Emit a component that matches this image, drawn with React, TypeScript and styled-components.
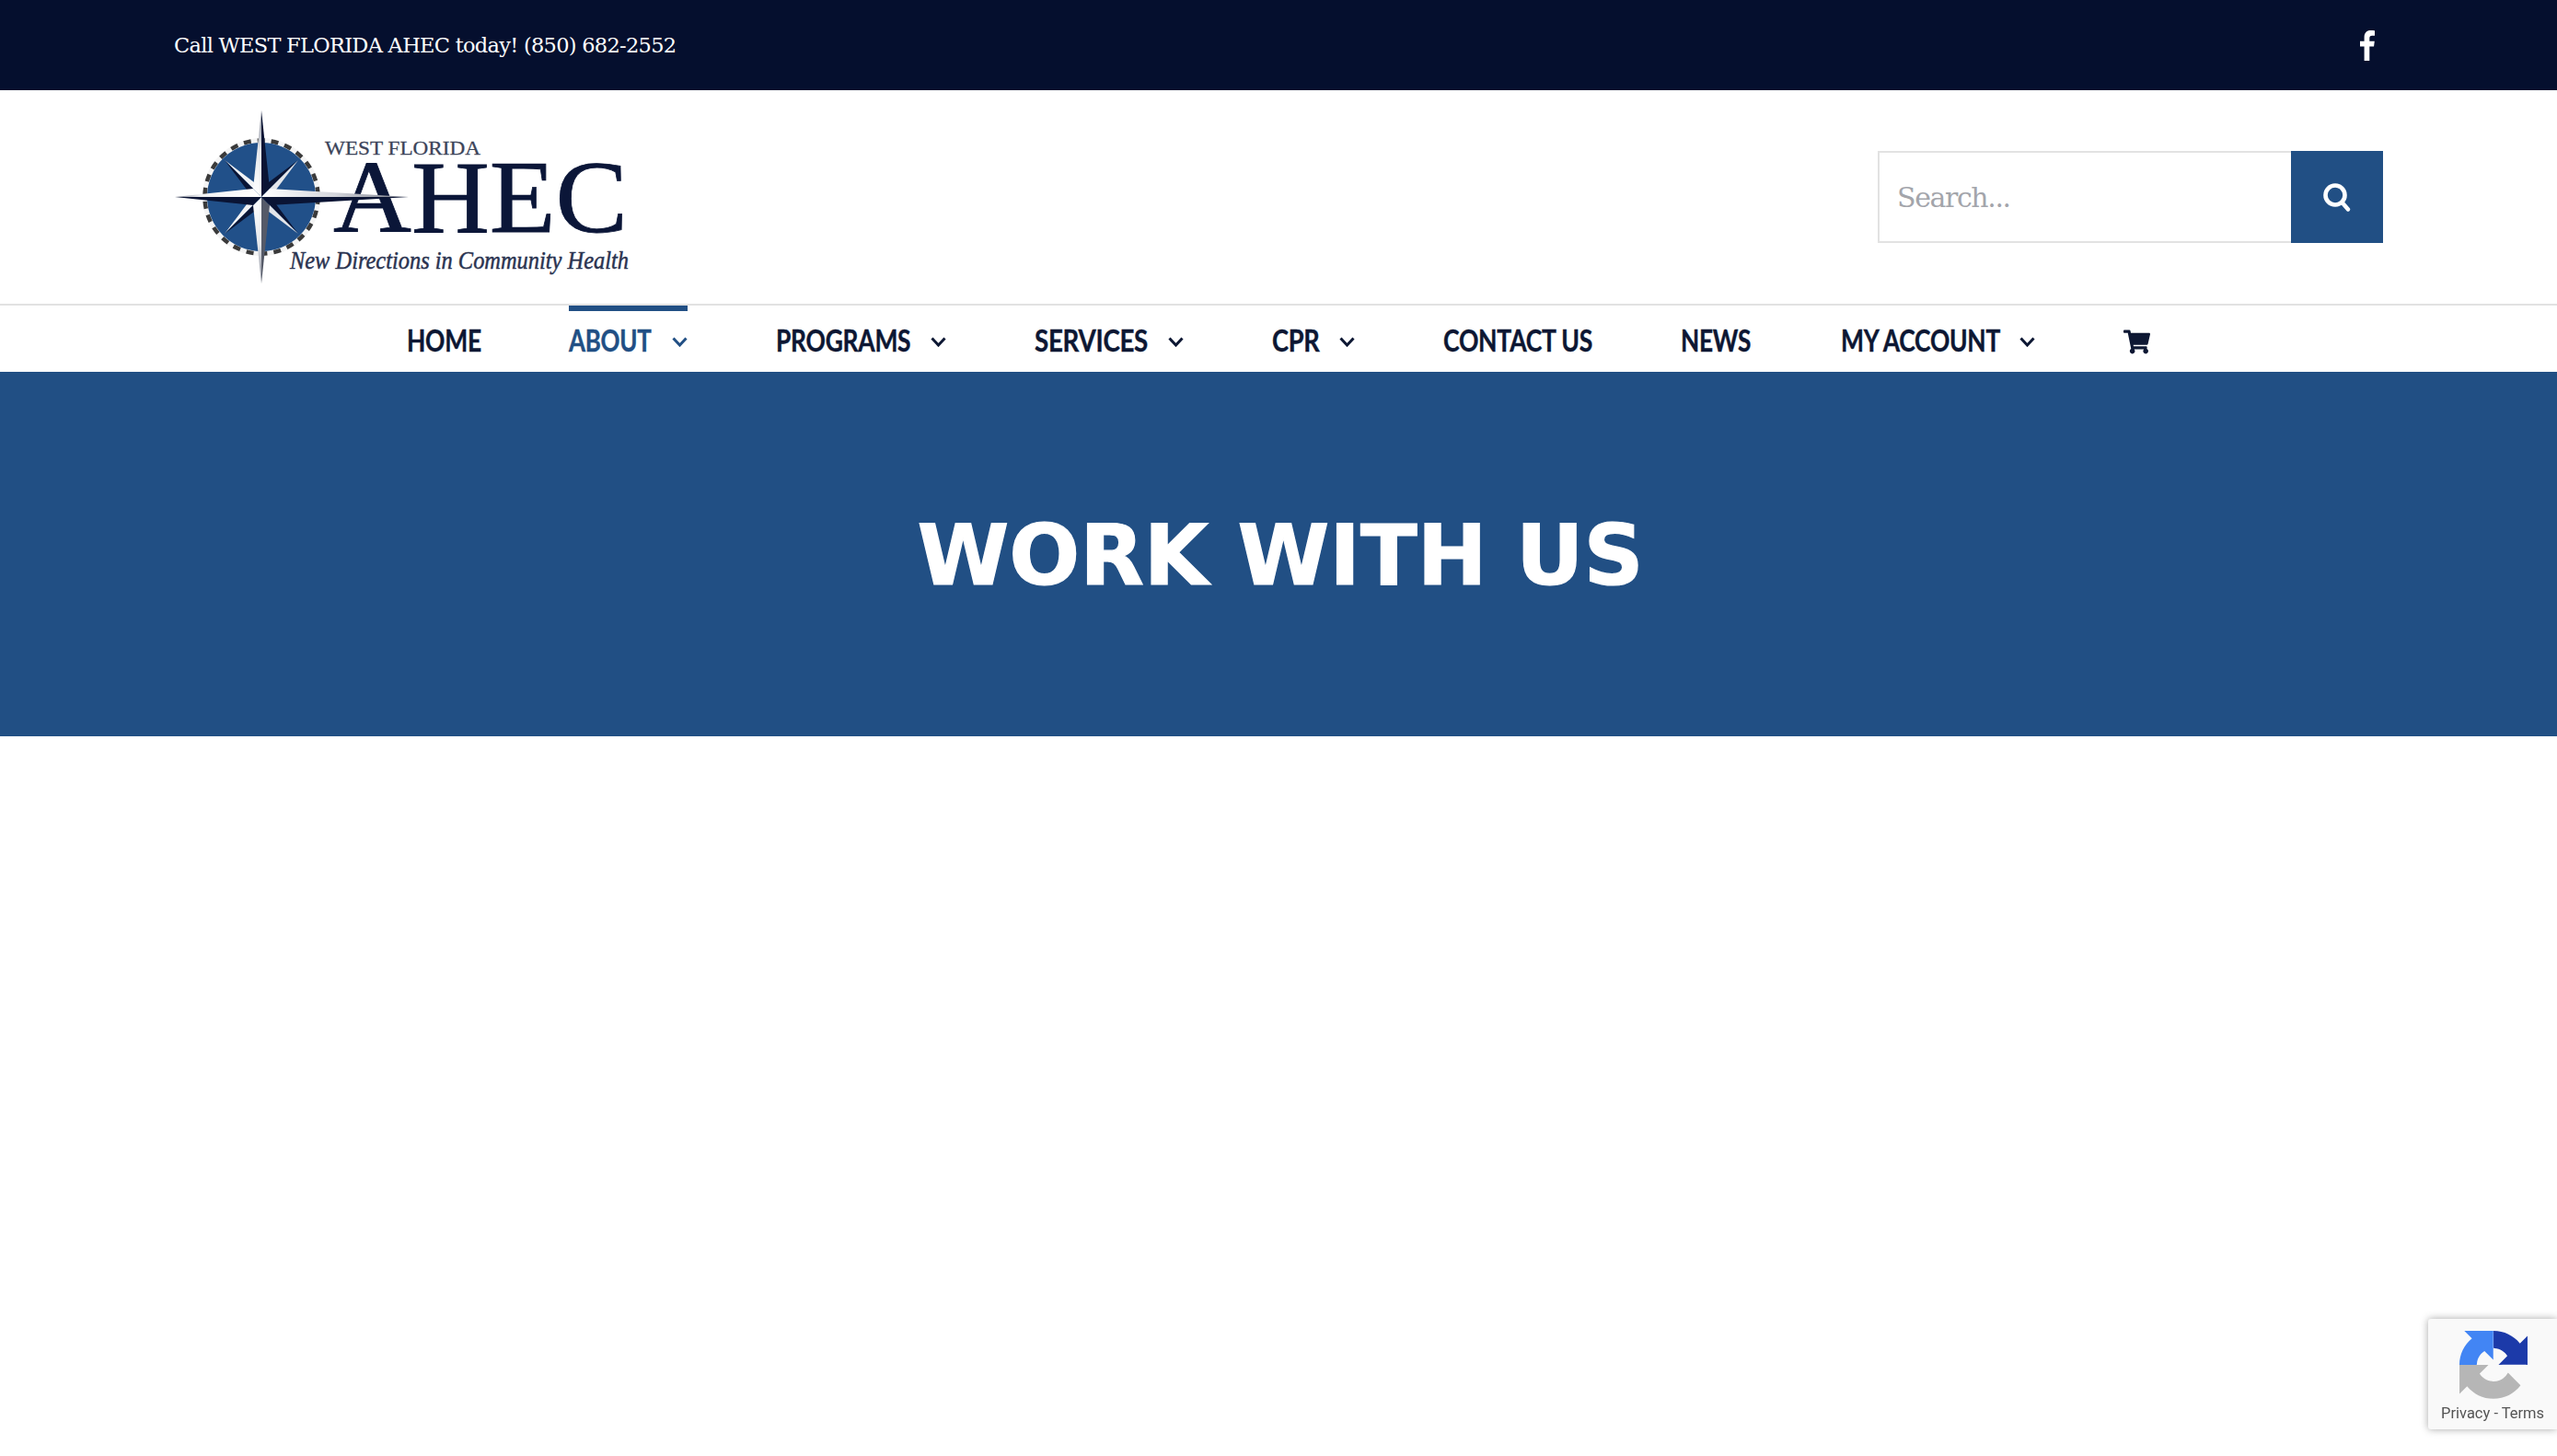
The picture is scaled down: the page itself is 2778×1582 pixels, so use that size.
import React from "react";
import styled, { createGlobalStyle } from "styled-components";
import { FaShoppingCart } from "react-icons/fa";

const navy = "#050f2e";
const blue = "#214f84";

const Global = createGlobalStyle`
  html, body { margin: 0; padding: 0; background: #fff; }
  body { font-family: "Liberation Serif", serif; overflow: hidden; }
`;
const Page = styled.div`
  width: 2778px;
  height: 1582px;
  background: #fff;
  display: flex;
  flex-direction: column;
`;
const TopBar = styled.div`
  height: 98px;
  flex: none;
  background: ${navy};
  color: #fff;
  display: flex;
  align-items: center;
  justify-content: space-between;
  padding: 0 198px 0 189px;
`;
const Phone = styled.span`
  font: 400 22.5px "DejaVu Serif", serif;
  letter-spacing: -0.72px;
`;
const Social = styled.span`
  display: flex;
  color: #fff;
`;
const Header = styled.header`
  height: 232px;
  flex: none;
  display: flex;
  align-items: center;
  justify-content: space-between;
  padding: 0 189px 0 186px;
  border-bottom: 2px solid #e2e2e2;
  box-sizing: content-box;
`;
const Search = styled.form`
  display: flex;
  height: 100px;
  width: 549px;
`;
const SearchInput = styled.input`
  flex: 1;
  min-width: 0;
  box-sizing: border-box;
  border: 2px solid #e2e2e2;
  border-right: 0;
  padding: 0 19px;
  font: 400 30px "DejaVu Serif", serif;
  letter-spacing: -1.4px;
  outline: none;
  &::placeholder { color: #a3a5ab; opacity: 1; }
`;
const SearchButton = styled.button`
  width: 100px;
  border: 0;
  padding: 0;
  background: ${blue};
  display: flex;
  align-items: center;
  justify-content: center;
`;
const Nav = styled.nav`
  height: 72px;
  flex: none;
  display: flex;
  justify-content: center;
  gap: 96px;
`;
const NavItem = styled.a<{ $active?: boolean }>`
  display: flex;
  align-items: center;
  gap: 20px;
  box-sizing: border-box;
  height: 72px;
  border-top: 6px solid ${(p) => (p.$active ? blue : "transparent")};
  color: ${(p) => (p.$active ? blue : "#0d1733")};
`;
const NavLabel = styled.span<{ $w: number; $sx: number }>`
  display: block;
  width: ${(p) => p.$w}px;
  padding-bottom: 3px;
  font: 700 32px "Lato", sans-serif;
  letter-spacing: -0.3px;
  -webkit-text-stroke: 0.4px currentColor;
  text-transform: uppercase;
  white-space: nowrap;
  transform: scaleX(${(p) => p.$sx});
  transform-origin: left center;
`;
const Hero = styled.section`
  height: 396px;
  flex: none;
  background: ${blue};
  display: flex;
  justify-content: center;
  padding: 146px 0 0 4px;
  box-sizing: border-box;
`;
const Title = styled.h1`
  margin: 0;
  color: #fff;
  font: 700 90.5px/1.2 "DejaVu Sans", sans-serif;
  -webkit-text-stroke: 1.2px #fff;
  height: 108px;
`;
const Badge = styled.div`
  position: fixed;
  left: 2638px;
  top: 1433px;
  width: 140px;
  height: 120px;
  background: #f9f9f9;
  border-radius: 3px 0 0 3px;
  box-shadow: 0 0 8px rgba(0, 0, 0, 0.35);
  display: flex;
  flex-direction: column;
  padding: 13px 0 0 14px;
  box-sizing: border-box;
`;
const BadgeMark = styled.div`
  margin-left: 20px;
  display: flex;
`;
const BadgeText = styled.div`
  margin-top: 7px;
  font: 400 16.5px/18px "Roboto", sans-serif;
  color: #555;
  white-space: nowrap;
`;

const Chevron = () => (
  <svg width="17" height="11" viewBox="0 0 17 11" fill="none">
    <polyline points="1.5,1.5 8.5,9 15.5,1.5" stroke="currentColor" strokeWidth="3" />
  </svg>
);

const FacebookIcon = () => (
  <svg width="16" height="33" viewBox="0 0 16 33" fill="#fff">
    <path d="M4.6 33V17.6H0v-5.8h4.6V7.6C4.6 2.6 7.4 0 11.4 0c1.900 0 3.600.15 4.600.3v5.400h-2.800c-2.300 0-2.900 1.100-2.900 2.900v3.200h5.500l-.75 5.800h-4.750V33z" />
  </svg>
);

const dark = "#0a1434";

const Logo = () => (
  <svg width="540" height="196" viewBox="186 116 540 196">
    <defs>
      <linearGradient id="silV" x1="0" y1="0" x2="0" y2="1">
        <stop offset="0" stopColor="#7d8290" />
        <stop offset="0.45" stopColor="#e6e8ec" />
        <stop offset="1" stopColor="#ffffff" />
      </linearGradient>
      <linearGradient id="silVB" x1="0" y1="0" x2="0" y2="1">
        <stop offset="0" stopColor="#ffffff" />
        <stop offset="0.55" stopColor="#e6e8ec" />
        <stop offset="1" stopColor="#7d8290" />
      </linearGradient>
      <linearGradient id="silL" x1="0" y1="0" x2="1" y2="0">
        <stop offset="0" stopColor="#7d8290" />
        <stop offset="0.3" stopColor="#f0f1f3" />
        <stop offset="1" stopColor="#ffffff" />
      </linearGradient>
      <linearGradient id="silR" x1="0" y1="0" x2="1" y2="0">
        <stop offset="0" stopColor="#ffffff" />
        <stop offset="0.5" stopColor="#d4d6dc" />
        <stop offset="1" stopColor="#6e7280" />
      </linearGradient>
    </defs>
    <circle cx="284" cy="214" r="64" fill="#f4f4f4" />
    <circle cx="284" cy="214" r="61.500" fill="none" stroke="#3a3a3a" strokeWidth="4.500" strokeDasharray="8 7" />
    <circle cx="284" cy="214" r="59" fill="#215089" />
    {/* diagonal points */}
    <polygon points="244,174 276,198 276,206" fill="#f2f3f5" />
    <polygon points="244,174 268,206 276,206" fill={dark} />
    <polygon points="324,174 292,198 292,206" fill={dark} />
    <polygon points="324,174 300,206 292,206" fill="#e4e6ea" />
    <polygon points="244,254 268,222 276,222" fill="#f2f3f5" />
    <polygon points="244,254 276,230 276,222" fill={dark} />
    <polygon points="324,254 300,222 292,222" fill={dark} />
    <polygon points="324,254 292,230 292,222" fill="#e4e6ea" />
    <text x="353" y="168" fontFamily="Liberation Serif" fontSize="22" fill="#3c4459" stroke="#3c4459" strokeWidth="0.3" textLength="169" lengthAdjust="spacingAndGlyphs">WEST FLORIDA</text>
    <text x="362" y="252" fontFamily="Liberation Serif" fontSize="112" fill="#0b1638" stroke="#0b1638" strokeWidth="0.8" textLength="320" lengthAdjust="spacingAndGlyphs">AHEC</text>
    <text x="315" y="292" fontFamily="Liberation Serif" fontStyle="italic" fontSize="28" fill="#2a3350" stroke="#2a3350" strokeWidth="0.5" textLength="368" lengthAdjust="spacingAndGlyphs">New Directions in Community Health</text>
    {/* main points */}
    <polygon points="284,120 275,205 284,214" fill="url(#silV)" />
    <polygon points="284,120 293,205 284,214" fill={dark} />
    <polygon points="284,308 275,223 284,214" fill="url(#silVB)" />
    <polygon points="284,308 293,223 284,214" fill="#555a68" />
    <polygon points="190,214 275,205 284,214" fill="url(#silL)" />
    <polygon points="190,214 275,223 284,214" fill={dark} />
    <polygon points="444,214 293,205 284,214" fill="url(#silR)" />
    <polygon points="444,214 293,223 284,214" fill={dark} />
  </svg>
);

const SearchIcon = () => (
  <svg width="30" height="31" viewBox="0 0 30 31" fill="none" stroke="#fff" strokeLinecap="round">
    <circle cx="13" cy="13" r="10.5" strokeWidth="4.6" />
    <line x1="20.5" y1="21" x2="27" y2="28.5" strokeWidth="4.4" />
  </svg>
);

const RecaptchaIcon = () => (
  <svg width="74" height="74" viewBox="0 0 64 64">
    <path fill="#1c3aa9" d="M64 31.955l-.033-1.37V4.687l-7.16 7.16C50.948 4.674 42.033.093 32.05.093v16.23c.485 0 .86.057 1.135.163 4.976.393 9.288 3.14 11.828 7.124l-8.307 8.307c10.522-.04 22.4-.066 27.295.006" />
    <path fill="#4285f4" d="M31.862.001l-1.37.033H4.594l7.16 7.16C4.58 13.054 0 21.97 0 31.953h16.26c0-.485.057-.86.163-1.135.393-4.976 3.14-9.288 7.124-11.828l8.307 8.307c-.04-10.522-.066-22.4.006-27.295" />
    <path fill="#b6b6b6" d="M.001 31.953l.033 1.37v25.898l7.16-7.160c5.86 7.173 14.775 11.754 24.758 11.754 10.4 0 19.622-4.96 25.458-12.640l-11.736-11.860a15.55 15.55 0 0 1-4.754 5.334c-2.05 1.6-4.952 2.906-8.968 2.906-.485 0-.86-.057-1.135-.163-4.976-.393-9.288-3.14-11.828-7.124l8.307-8.307c-10.522.04-22.4.066-27.295-.006" />
  </svg>
);

const items: { label: string; w: number; sx: number; caret?: boolean; active?: boolean }[] = [
  { label: "Home", w: 80, sx: 0.825 },
  { label: "About", w: 92, sx: 0.81, caret: true, active: true },
  { label: "Programs", w: 148, sx: 0.825, caret: true },
  { label: "Services", w: 125, sx: 0.865, caret: true },
  { label: "CPR", w: 53, sx: 0.85, caret: true },
  { label: "Contact Us", w: 162, sx: 0.83 },
  { label: "News", w: 78, sx: 0.82 },
  { label: "My Account", w: 174, sx: 0.825, caret: true },
];

export default function App() {
  return (
    <Page>
      <Global />
      <TopBar>
        <Phone>Call WEST FLORIDA AHEC today! (850) 682-2552</Phone>
        <Social><FacebookIcon /></Social>
      </TopBar>
      <Header>
        <Logo />
        <Search onSubmit={(e) => e.preventDefault()}>
          <SearchInput placeholder="Search..." />
          <SearchButton aria-label="Search"><SearchIcon /></SearchButton>
        </Search>
      </Header>
      <Nav>
        {items.map((it) => (
          <NavItem key={it.label} $active={it.active}>
            <NavLabel $w={it.w} $sx={it.sx}>{it.label}</NavLabel>
            {it.caret && <Chevron />}
          </NavItem>
        ))}
        <NavItem aria-label="Cart"><FaShoppingCart size={29} /></NavItem>
      </Nav>
      <Hero>
        <Title>WORK WITH US</Title>
      </Hero>
      <Badge>
        <BadgeMark><RecaptchaIcon /></BadgeMark>
        <BadgeText>Privacy - Terms</BadgeText>
      </Badge>
    </Page>
  );
}
